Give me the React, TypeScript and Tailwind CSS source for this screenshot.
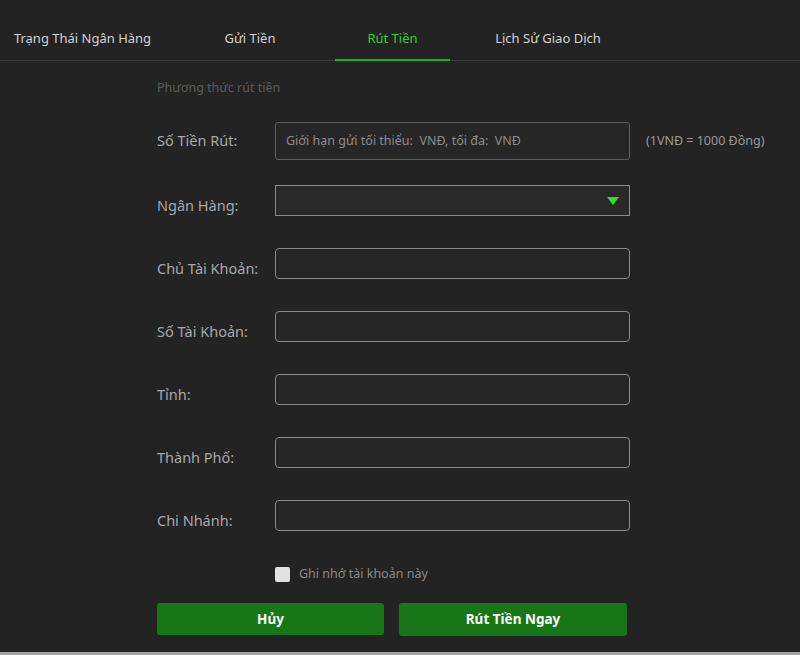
import React from "react";

const tabs = [
  { label: "Trạng Thái Ngân Hàng", w: "w-[165px]", active: false },
  { label: "Gửi Tiền", w: "w-[170px]", active: false },
  { label: "Rút Tiền", w: "w-[115px]", active: true },
  { label: "Lịch Sử Giao Dịch", w: "w-[196px]", active: false },
];

const fields = ["Chủ Tài Khoản:", "Số Tài Khoản:", "Tỉnh:", "Thành Phố:", "Chi Nhánh:"];

export default function App() {
  return (
    <div
      className="w-[800px] h-[655px] bg-[#232323] border-b-[3px] border-[#a3a3a3] flex flex-col overflow-hidden"
      style={{ fontFamily: '"Noto Sans", "Open Sans", sans-serif' }}
    >
      {/* tab bar */}
      <div className="h-[61px] flex border-b border-[#3a3a3a] shrink-0">
        {tabs.map((t) => (
          <div
            key={t.label}
            className={`${t.w} relative flex items-center justify-center pt-[18px] text-[13px] ${
              t.active ? "text-[#2ed12e]" : "text-[#d2d2d2]"
            }`}
          >
            {t.label}
            {t.active && <div className="absolute left-0 right-0 bottom-[-1px] h-[2px] bg-[#22b02a]" />}
          </div>
        ))}
      </div>

      <div className="pl-[157px] flex flex-col">
        <div className="mt-[18px] h-[18px] text-[12.5px] leading-[18px] text-[#5c5c5c]">Phương thức rút tiền</div>

        {/* amount */}
        <div className="mt-[25px] flex items-center h-[38px]">
          <div className="w-[118px] text-[14.5px] text-[#a8a8a8]">Số Tiền Rút:</div>
          <div className="w-[355px] h-[38px] rounded-[3px] border border-[#5e5e5e] bg-[#262626] flex items-center pl-[10px] text-[12.5px] text-[#8c8c8c]">
            Giới hạn gửi tối thiểu:&nbsp; VNĐ, tối đa:&nbsp; VNĐ
          </div>
          <div className="ml-[16px] text-[12.5px] text-[#9a9a9a]">(1VNĐ = 1000 Đồng)</div>
        </div>

        {/* bank select */}
        <div className="mt-[25px] flex h-[31px]">
          <div className="w-[118px] pt-[9px] text-[14.5px] leading-[22px] text-[#a8a8a8]">Ngân Hàng:</div>
          <div className="w-[355px] h-[31px] border border-[#8c8c8c] bg-[#292929] flex items-center justify-end pr-[10px]">
            <svg width="12" height="8" viewBox="0 0 12 8">
              <path d="M0 0 H12 L6 8 Z" fill="#2ee02e" />
            </svg>
          </div>
        </div>

        {fields.map((f) => (
          <div key={f} className="mt-[32px] flex h-[31px]">
            <div className="w-[118px] pt-[9px] text-[14.5px] leading-[22px] text-[#a8a8a8] whitespace-nowrap">{f}</div>
            <div className="w-[355px] h-[31px] rounded-[4px] border border-[#8a8a8a] bg-[#262626]" />
          </div>
        ))}

        {/* remember */}
        <div className="mt-[36px] ml-[118px] flex items-center h-[15px]">
          <div className="w-[15px] h-[15px] rounded-[2px] bg-[#e2e2e2]" />
          <span className="ml-[9px] text-[12.5px] text-[#8a8a8a]">Ghi nhớ tài khoản này</span>
        </div>

        {/* actions */}
        <div className="mt-[21px] flex gap-[15px]">
          <button className="w-[227px] h-[32px] rounded-[3px] bg-[#177716] text-white text-[13.5px] font-bold">
            Hủy
          </button>
          <button className="w-[228px] h-[33px] rounded-[3px] bg-[#177716] text-white text-[13.5px] font-bold">
            Rút Tiền Ngay
          </button>
        </div>
      </div>
    </div>
  );
}
